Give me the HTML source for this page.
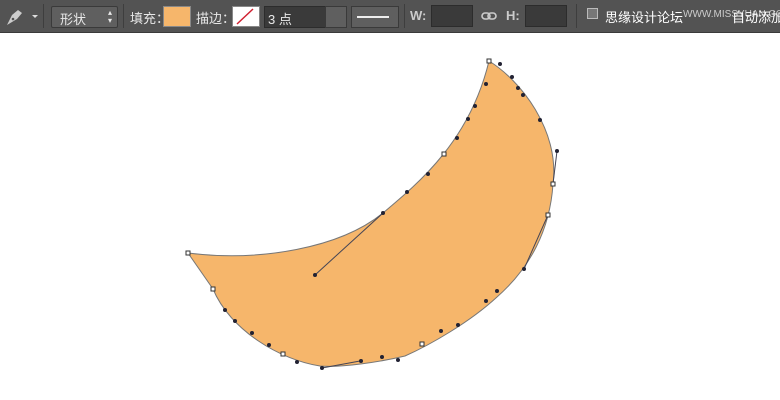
<!DOCTYPE html>
<html><head><meta charset="utf-8"><style>
body{margin:0;width:780px;height:400px;background:#fff;position:relative;overflow:hidden;font-family:"Liberation Sans","Noto Sans CJK SC",sans-serif}
.bar{position:absolute;left:0;top:0;width:780px;height:32px;background:#535353;border-bottom:1px solid #3a3a3a;color:#e8e8e8;font-size:13px;overflow:hidden}
.bar>*{position:absolute;white-space:nowrap}
.sep{top:4px;width:1px;height:24px;background:#3e3e3e}
.box{background:#3a3a3a;border:1px solid #2c2c2c}
</style></head><body>
<div class="bar">
<svg style="left:4px;top:7px" width="22" height="20" viewBox="0 0 22 20"><path d="M3 18 L8 8 L14 3 L18 6 L13 12 L3 18 Z" fill="#ccc"/><circle cx="9" cy="12" r="1.3" fill="#535353"/></svg>
<div style="left:32px;top:15px;border:3px solid transparent;border-top:3px solid #ddd"></div>
<div class="sep" style="left:43px"></div>
<div style="left:51px;top:6px;width:65px;height:20px;background:#5f5f5f;border:1px solid #3a3a3a;border-radius:2px"><span style="position:absolute;left:8px;top:2px">形状</span><span style="position:absolute;right:5px;top:2px;font-size:8px;line-height:8px">▴<br>▾</span></div>
<div class="sep" style="left:123px"></div>
<span style="left:130px;top:8px">填充：</span>
<div style="left:163px;top:6px;width:26px;height:19px;background:#f6b66b;border:1px solid #888"></div>
<span style="left:196px;top:8px">描边：</span>
<div style="left:232px;top:6px;width:26px;height:19px;background:#fff;border:1px solid #888"><svg width="26" height="19"><line x1="4" y1="17" x2="20" y2="2" stroke="#d02030" stroke-width="1.5"/></svg></div>
<div class="box" style="left:264px;top:6px;width:60px;height:20px"><span style="position:absolute;left:3px;top:2px">3 点</span></div>
<div style="left:325px;top:6px;width:20px;height:20px;background:#5f5f5f;border:1px solid #3a3a3a"></div>
<div style="left:351px;top:6px;width:46px;height:20px;background:#5f5f5f;border:1px solid #3a3a3a"><div style="position:absolute;left:5px;top:9px;width:32px;height:2px;background:#eee"></div></div>
<div class="sep" style="left:404px"></div>
<span style="left:410px;top:8px;font-weight:bold;color:#ccc">W:</span>
<div class="box" style="left:431px;top:5px;width:40px;height:20px"></div>
<svg style="left:481px;top:11px" width="16" height="10"><rect x="1" y="2" width="8" height="6" rx="3" fill="none" stroke="#ccc" stroke-width="1.6"/><rect x="7" y="2" width="8" height="6" rx="3" fill="none" stroke="#ccc" stroke-width="1.6"/></svg>
<span style="left:506px;top:8px;font-weight:bold;color:#ccc">H:</span>
<div class="box" style="left:525px;top:5px;width:40px;height:20px"></div>
<div class="sep" style="left:576px"></div>
<div style="left:587px;top:8px;width:9px;height:9px;border:1px solid #bbb;background:#777"></div>
<span style="left:605px;top:7px;color:#fff">思缘设计论坛</span>
<span style="left:683px;top:9px;color:#ccc;font-size:10px">WWW.MISSYUAN.COM</span>
<span style="left:732px;top:7px;color:#fff">自动添加</span>
</div>
<svg style="position:absolute;left:0;top:0" width="780" height="400">
<path d="M188,253 C260,262 340,248 383,213 C420,182 470,140 489,61 C520,80 560,130 553,184 C550,230 530,268 497,297 C470,322 430,345 405,356 C380,362 340,368 320,366 C280,360 230,330 213,289 Z" fill="#f6b66b" stroke="#777" stroke-width="1"/>
<g stroke="#445" stroke-width="1"><line x1="383" y1="213" x2="315" y2="275"/><line x1="553" y1="184" x2="557" y2="151"/><line x1="548" y1="215" x2="524" y2="269"/><line x1="360" y1="361" x2="322" y2="368"/></g>
<g fill="#223">
<circle cx="315" cy="275" r="2"/><circle cx="557" cy="151" r="2"/><circle cx="524" cy="269" r="2"/><circle cx="322" cy="368" r="2"/>
<circle cx="407" cy="192" r="2"/><circle cx="428" cy="174" r="2"/><circle cx="457" cy="138" r="2"/><circle cx="468" cy="119" r="2"/><circle cx="475" cy="106" r="2"/><circle cx="486" cy="84" r="2"/>
<circle cx="500" cy="64" r="2"/><circle cx="512" cy="77" r="2"/><circle cx="518" cy="88" r="2"/><circle cx="523" cy="95" r="2"/><circle cx="540" cy="120" r="2"/>
<circle cx="497" cy="291" r="2"/><circle cx="486" cy="301" r="2"/><circle cx="458" cy="325" r="2"/><circle cx="441" cy="331" r="2"/><circle cx="398" cy="360" r="2"/><circle cx="382" cy="357" r="2"/><circle cx="361" cy="361" r="2"/>
<circle cx="297" cy="362" r="2"/><circle cx="269" cy="345" r="2"/><circle cx="252" cy="333" r="2"/><circle cx="235" cy="321" r="2"/><circle cx="225" cy="310" r="2"/><circle cx="383" cy="213" r="2"/>
</g>
<g fill="#fff" stroke="#333"><rect x="186" y="251" width="4" height="4"/><rect x="487" y="59" width="4" height="4"/><rect x="551" y="182" width="4" height="4"/><rect x="546" y="213" width="4" height="4"/><rect x="442" y="152" width="4" height="4"/><rect x="211" y="287" width="4" height="4"/><rect x="281" y="352" width="4" height="4"/><rect x="420" y="342" width="4" height="4"/></g>
</svg>
</body></html>
